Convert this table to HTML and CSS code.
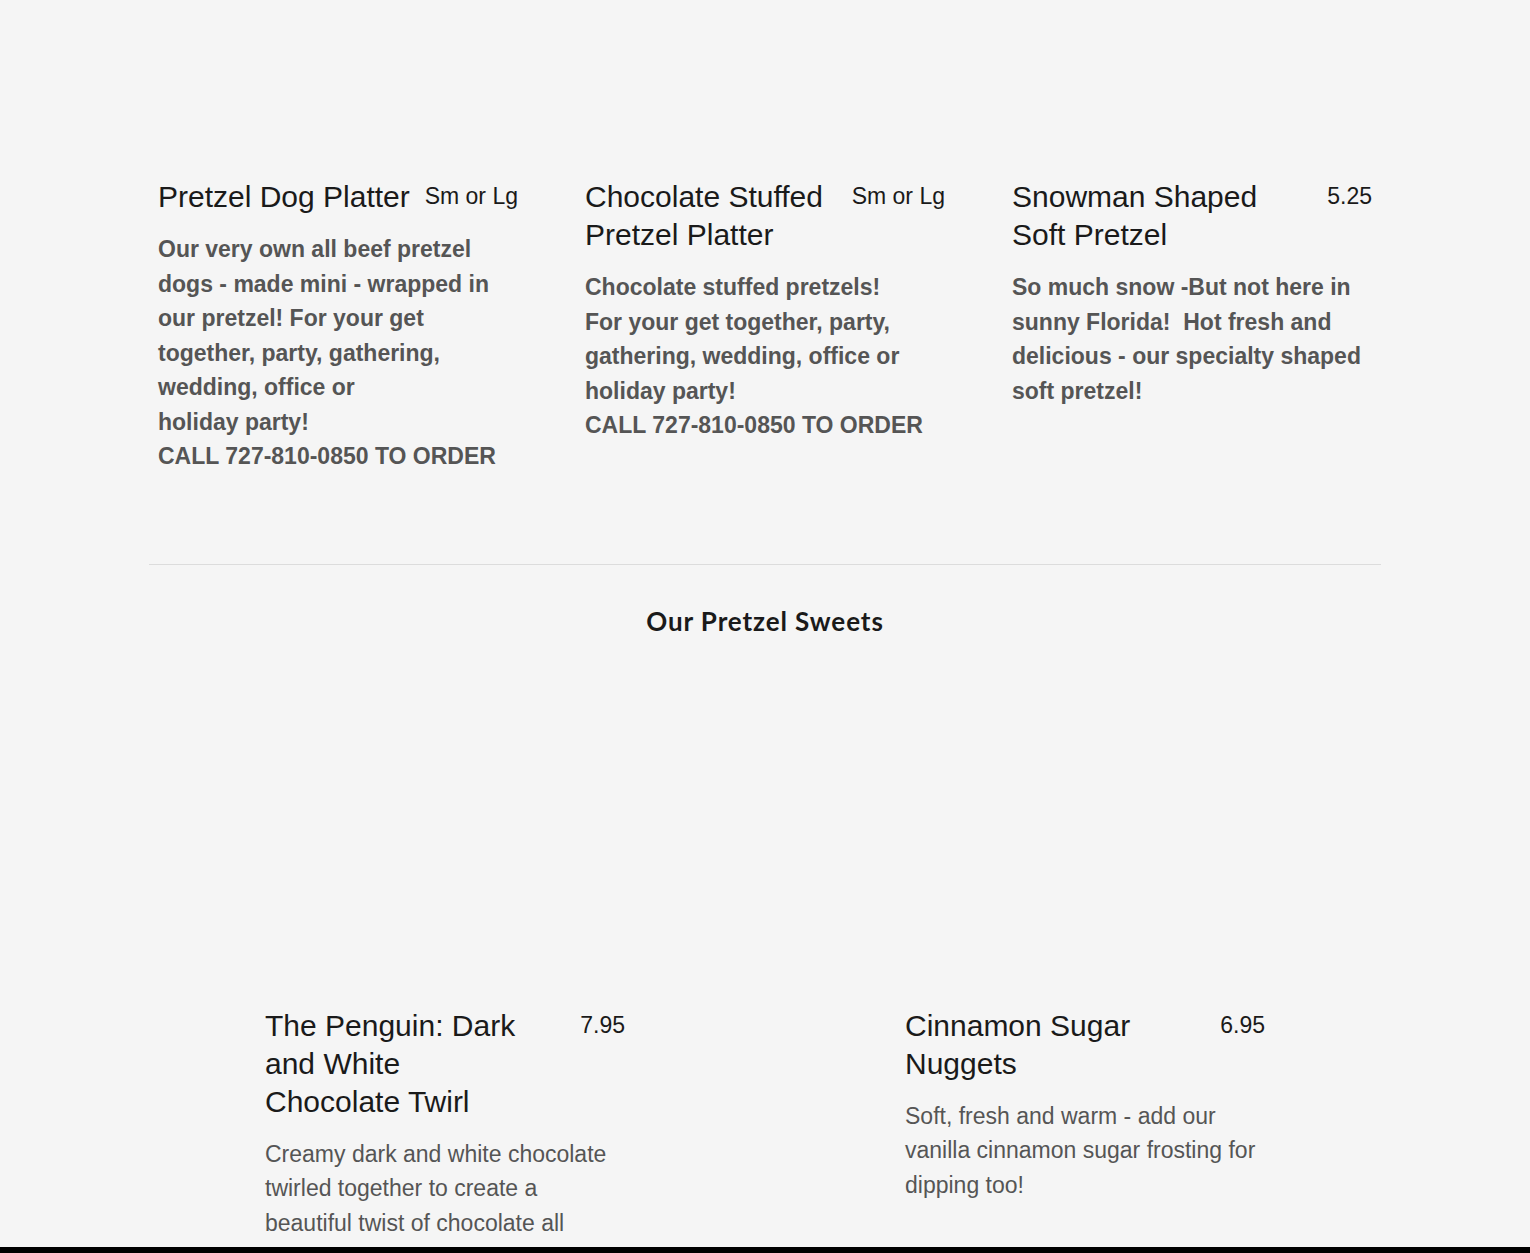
FILE: index.html
```html
<!DOCTYPE html>
<html lang="en">
<head>
<meta charset="utf-8">
<title>Menu</title>
<link rel="stylesheet" href="styles.css">
</head>
<body>
<main class="menu">
  <section class="grid grid-3">
    <article class="item">
      <div class="photo photo-top"></div>
      <div class="head">
        <h3 class="name">Pretzel Dog Platter</h3>
        <span class="price">Sm or Lg</span>
      </div>
      <p class="desc bold">Our very own all beef pretzel dogs - made mini - wrapped in our pretzel! For your get together, party, gathering, wedding, office or<br>holiday party!<br>CALL 727-810-0850 TO ORDER</p>
    </article>
    <article class="item">
      <div class="photo photo-top"></div>
      <div class="head">
        <h3 class="name">Chocolate Stuffed Pretzel Platter</h3>
        <span class="price">Sm or Lg</span>
      </div>
      <p class="desc bold">Chocolate stuffed pretzels!<br>For your get together, party, gathering, wedding, office or holiday party!<br>CALL 727-810-0850 TO ORDER</p>
    </article>
    <article class="item">
      <div class="photo photo-top"></div>
      <div class="head">
        <h3 class="name">Snowman Shaped Soft Pretzel</h3>
        <span class="price">5.25</span>
      </div>
      <p class="desc bold">So much snow -But not here in sunny Florida!&nbsp; Hot fresh and delicious - our specialty shaped soft pretzel!</p>
    </article>
  </section>

  <hr class="divider">

  <h2 class="section-title">Our Pretzel Sweets</h2>

  <section class="grid grid-2">
    <article class="item">
      <div class="photo photo-sweets"></div>
      <div class="head">
        <h3 class="name">The Penguin: Dark and White Chocolate Twirl</h3>
        <span class="price">7.95</span>
      </div>
      <p class="desc">Creamy dark and white chocolate twirled together to create a beautiful twist of chocolate all<br>over a soft pretzel!</p>
    </article>
    <article class="item">
      <div class="photo photo-sweets"></div>
      <div class="head">
        <h3 class="name">Cinnamon Sugar Nuggets</h3>
        <span class="price">6.95</span>
      </div>
      <p class="desc">Soft, fresh and warm - add our vanilla cinnamon sugar frosting for dipping too!</p>
    </article>
  </section>
</main>
<div class="bottom-bar"></div>
</body>
</html>
```
FILE: styles.css
```css
html, body {
  margin: 0;
  padding: 0;
}
body {
  background: #f5f5f5;
  font-family: "Liberation Sans", Arial, sans-serif;
  color: #1a1a1a;
  overflow: hidden;
  height: 1253px;
}
.menu {
  width: 1232px;
  margin: 0 auto;
}
.grid {
  display: grid;
}
.grid-3 {
  grid-template-columns: repeat(3, 360px);
  column-gap: 67px;
  padding-left: 9px;
}
.grid-2 {
  grid-template-columns: repeat(2, 360px);
  column-gap: 280px;
  justify-content: center;
}
.photo-top {
  height: 178px;
}
.photo-sweets {
  height: 371px;
}
.head {
  display: flex;
  justify-content: space-between;
  align-items: flex-start;
}
.name {
  margin: 0;
  font-weight: 400;
  font-size: 30px;
  line-height: 38px;
  color: #1a1a1a;
  flex: 0 1 auto;
  max-width: 270px;
  padding-right: 14px;
}
.price {
  flex: none;
  font-size: 23px;
  line-height: 38px;
  color: #1a1a1a;
  margin-top: -1px;
}
.desc {
  margin: 16px 0 0;
  font-size: 23px;
  line-height: 34.5px;
  color: #555;
}
.desc.bold {
  font-weight: 700;
}
.divider {
  border: 0;
  border-top: 1px solid #dcdcdc;
  margin: 90px 0 0;
}
.section-title {
  margin: 41px 0 0;
  text-align: center;
  font-family: Lato, "Open Sans", sans-serif;
  font-weight: 700;
  font-size: 26px;
  letter-spacing: 0.9px;
  line-height: 30px;
  color: #1a1a1a;
}
.bottom-bar {
  position: fixed;
  left: 0;
  right: 0;
  bottom: 0;
  height: 6px;
  background: #000;
}
```
